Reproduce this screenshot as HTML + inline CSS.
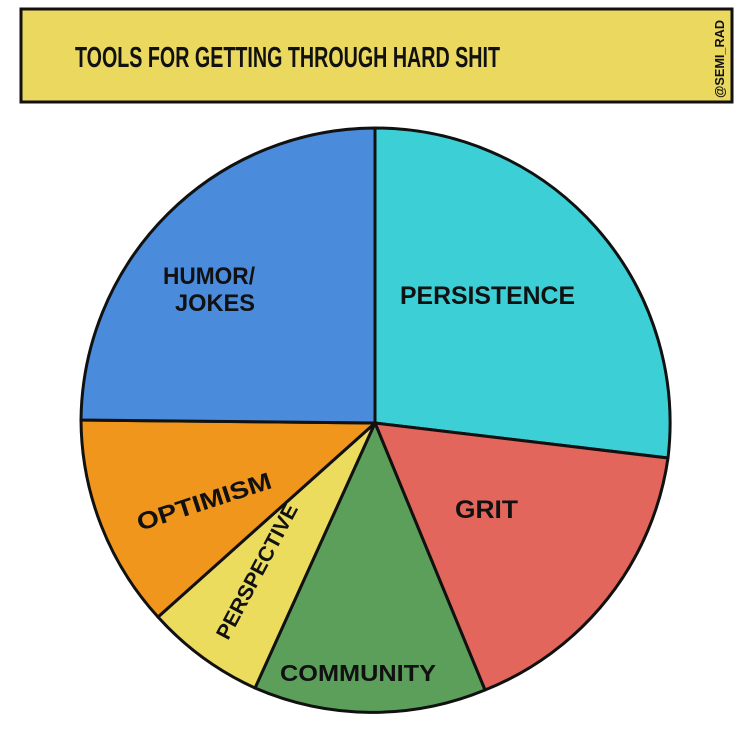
<!DOCTYPE html>
<html><head><style>
html,body{margin:0;padding:0;background:#fff;width:750px;height:750px;overflow:hidden}
svg{display:block}
text{font-family:"Liberation Sans",sans-serif;font-weight:bold;fill:#111}
</style></head><body>
<svg width="750" height="750" viewBox="0 0 750 750">
<rect x="21" y="9" width="711" height="93" fill="#ead85f" stroke="#111" stroke-width="3"/>
<text x="75" y="67" font-size="29" textLength="425" lengthAdjust="spacingAndGlyphs">TOOLS  FOR  GETTING  THROUGH  HARD  SHIT</text>
<text transform="translate(724,98) rotate(-90)" font-size="13" textLength="78" lengthAdjust="spacingAndGlyphs">@SEMI_RAD</text>
<g stroke="#111" stroke-width="3" stroke-linejoin="round">
<path d="M375,423 L375,128 A295,295 0 0 1 668,458 Z" fill="#3ccfd6"/>
<path d="M375,423 L668,458 A295,295 0 0 1 485,690 Z" fill="#e2665b"/>
<path d="M375,423 L485,690 A295,295 0 0 1 255,688 Z" fill="#5b9f5b"/>
<path d="M375,423 L255,688 A295,295 0 0 1 158,617 Z" fill="#ebdc5e"/>
<path d="M375,423 L158,617 A295,295 0 0 1 81,420 Z" fill="#f0961c"/>
<path d="M375,423 L81,420 A295,295 0 0 1 375,128 Z" fill="#4a8bdb"/>
</g>
<text x="400" y="304" font-size="25" textLength="175" lengthAdjust="spacingAndGlyphs">PERSISTENCE</text>
<text x="163" y="284" font-size="24" textLength="92" lengthAdjust="spacingAndGlyphs">HUMOR/</text>
<text x="175" y="311" font-size="24" textLength="80" lengthAdjust="spacingAndGlyphs">JOKES</text>
<text x="455" y="518" font-size="25" textLength="63" lengthAdjust="spacingAndGlyphs">GRIT</text>
<text transform="translate(140,531) rotate(-18)" font-size="24" textLength="140" lengthAdjust="spacingAndGlyphs">OPTIMISM</text>
<text transform="translate(228,641) rotate(-62)" font-size="21" textLength="150" lengthAdjust="spacingAndGlyphs">PERSPECTIVE</text>
<text x="280" y="681" font-size="23" textLength="156" lengthAdjust="spacingAndGlyphs">COMMUNITY</text>
</svg>
</body></html>
